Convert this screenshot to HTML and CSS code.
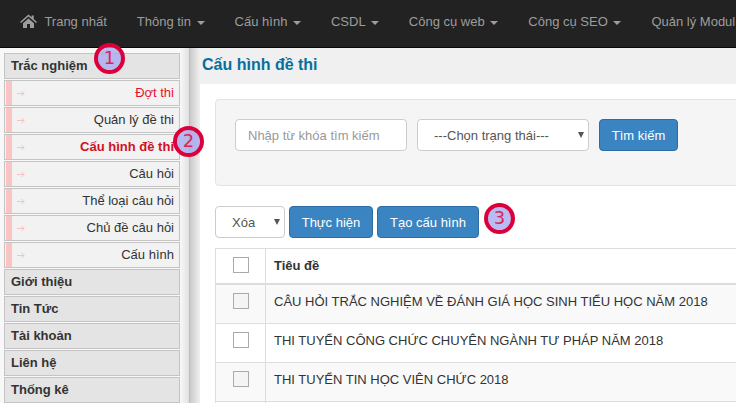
FILE: index.html
```html
<!DOCTYPE html>
<html lang="vi">
<head>
    <meta charset="UTF-8">
    <title>Cấu hình đề thi</title>
    <link rel="stylesheet" href="styles.css">
</head>
<body>
    <nav class="navbar">
        <a class="nav-link nav-home">
            <svg class="home-icon" viewBox="0 0 17 14" width="17" height="14"><path d="M8.5 0.6 L11.6 3.3 V1.4 H13.7 V5.1 L17 8 L16 9 L8.5 2.6 L1 9 L0 8 Z M3 9.2 L8.5 4.4 L14 9.2 V14 H10 V10 H7 V14 H3 Z" fill="#9d9d9d"/></svg>
            Trang nhất
        </a>
        <a class="nav-link">Thông tin <span class="caret"></span></a>
        <a class="nav-link">Cấu hình <span class="caret"></span></a>
        <a class="nav-link">CSDL <span class="caret"></span></a>
        <a class="nav-link">Công cụ web <span class="caret"></span></a>
        <a class="nav-link">Công cụ SEO <span class="caret"></span></a>
        <a class="nav-link">Quản lý Modul</a>
    </nav>

    <div class="wrapper">
        <aside class="sidebar">
            <div class="menu-head">Trắc nghiệm</div>
            <a class="menu-item item-red"><svg class="arrow" viewBox="0 0 8 7" width="8" height="7"><path d="M0 3.5 H7 M4.5 1 L7 3.5 L4.5 6" /></svg>Đợt thi</a>
            <a class="menu-item"><svg class="arrow" viewBox="0 0 8 7" width="8" height="7"><path d="M0 3.5 H7 M4.5 1 L7 3.5 L4.5 6" /></svg>Quản lý đề thi</a>
            <a class="menu-item item-active"><svg class="arrow" viewBox="0 0 8 7" width="8" height="7"><path d="M0 3.5 H7 M4.5 1 L7 3.5 L4.5 6" /></svg>Cấu hình đề thi</a>
            <a class="menu-item"><svg class="arrow" viewBox="0 0 8 7" width="8" height="7"><path d="M0 3.5 H7 M4.5 1 L7 3.5 L4.5 6" /></svg>Câu hỏi</a>
            <a class="menu-item"><svg class="arrow" viewBox="0 0 8 7" width="8" height="7"><path d="M0 3.5 H7 M4.5 1 L7 3.5 L4.5 6" /></svg>Thể loại câu hỏi</a>
            <a class="menu-item"><svg class="arrow" viewBox="0 0 8 7" width="8" height="7"><path d="M0 3.5 H7 M4.5 1 L7 3.5 L4.5 6" /></svg>Chủ đề câu hỏi</a>
            <a class="menu-item"><svg class="arrow" viewBox="0 0 8 7" width="8" height="7"><path d="M0 3.5 H7 M4.5 1 L7 3.5 L4.5 6" /></svg>Cấu hình</a>
            <div class="menu-head">Giới thiệu</div>
            <div class="menu-head">Tin Tức</div>
            <div class="menu-head">Tài khoản</div>
            <div class="menu-head">Liên hệ</div>
            <div class="menu-head">Thống kê</div>
        </aside>

        <main class="content">
            <h1 class="page-title">Cấu hình đề thi</h1>
            <div class="panel">
                <form class="well">
                    <input class="form-control search-input" type="text" placeholder="Nhập từ khóa tìm kiếm">
                    <span class="select-wrap">
                        <select class="form-control status-select">
                            <option>---Chọn trạng thái---</option>
                        </select>
                    </span>
                    <button class="btn btn-search" type="button">Tìm kiếm</button>
                </form>

                <div class="actions">
                    <span class="select-wrap">
                        <select class="form-control action-select">
                            <option>Xóa</option>
                        </select>
                    </span>
                    <button class="btn btn-run" type="button">Thực hiện</button>
                    <button class="btn btn-create" type="button">Tạo cấu hình</button>
                </div>

                <table class="exam-table">
                    <thead>
                        <tr>
                            <th class="col-check"><span class="check"></span></th>
                            <th>Tiêu đề</th>
                        </tr>
                    </thead>
                    <tbody>
                        <tr>
                            <td class="col-check"><span class="check"></span></td>
                            <td>CÂU HỎI TRẮC NGHIỆM VỀ ĐÁNH GIÁ HỌC SINH TIỂU HỌC NĂM 2018</td>
                        </tr>
                        <tr>
                            <td class="col-check"><span class="check"></span></td>
                            <td>THI TUYỂN CÔNG CHỨC CHUYÊN NGÀNH TƯ PHÁP NĂM 2018</td>
                        </tr>
                        <tr>
                            <td class="col-check"><span class="check"></span></td>
                            <td>THI TUYỂN TIN HỌC VIÊN CHỨC 2018</td>
                        </tr>
                        <tr>
                            <td class="col-check"></td>
                            <td></td>
                        </tr>
                    </tbody>
                </table>
            </div>
        </main>
    </div>

    <!-- numbered marks drawn over the screenshot -->
    <span class="mark mark-1">1</span>
    <span class="mark mark-2">2</span>
    <span class="mark mark-3">3</span>
</body>
</html>
```

FILE: styles.css
```css
html, body {
    margin: 0;
    height: 403px;
    overflow: hidden;
}
body {
    position: relative;
    font-family: "Liberation Sans", Arial, sans-serif;
    font-size: 13px;
    color: #333;
    background: #fff;
}
.navbar {
    display: flex;
    height: 47px;
    padding-left: 5px;
    overflow: hidden;
    background: #222;
    border-bottom: 1px solid #080808;
}
.nav-link {
    display: block;
    flex: none;
    padding: 0 15px;
    line-height: 44px;
    color: #9d9d9d;
    white-space: nowrap;
}
.nav-link:last-child {
    padding-right: 0;
}
.home-icon {
    margin-right: 4px;
    vertical-align: -2px;
}
.caret {
    display: inline-block;
    width: 0;
    height: 0;
    margin-left: 2px;
    vertical-align: middle;
    border-top: 4px solid #9d9d9d;
    border-left: 4px solid transparent;
    border-right: 4px solid transparent;
}
.wrapper {
    display: flex;
    height: 355px;
    overflow: hidden;
}
.sidebar {
    flex: none;
    width: 190px;
    box-sizing: border-box;
    padding: 5px 9px 0 4px;
    background: linear-gradient(to right, #f8f8f8 180px, #e2e2e2 189px);
    border-right: 1px solid #bdbdbd;
}
.menu-head {
    box-sizing: border-box;
    height: 26px;
    margin-bottom: 1px;
    padding-left: 6px;
    line-height: 23px;
    font-weight: bold;
    color: #333;
    background: #e4e4e4;
    border: 1px solid #c4c4c4;
}
.menu-item {
    display: flex;
    justify-content: space-between;
    box-sizing: border-box;
    height: 26px;
    margin-bottom: 1px;
    padding-right: 5px;
    padding-left: 1px;
    line-height: 24px;
    text-align: right;
    color: #333;
    background: #f2f2f2;
    border: 1px solid #c4c4c4;
}
.arrow {
    box-sizing: content-box;
    height: 7px;
    padding: 9px 0 8px 5px;
    border-left: 6px solid #fbc4c4;
    fill: none;
    stroke: #f8c0c0;
    stroke-width: 1;
}
.item-red {
    color: #e8112d;
}
.item-active {
    color: #d0111f;
    font-weight: bold;
}
.content {
    flex: 1;
    min-width: 0;
    background: linear-gradient(to right, #cacaca, #f0f0f0 10px);
}
.page-title {
    height: 36px;
    margin: 0 0 0 12px;
    font-size: 16px;
    line-height: 33px;
    font-weight: bold;
    color: #066f9e;
}
.panel {
    box-sizing: border-box;
    height: 319px;
    margin-left: 10px;
    padding: 15px 0 0 15px;
    overflow: hidden;
    background: #fff;
}
.well {
    display: flex;
    align-items: flex-start;
    gap: 10px;
    box-sizing: border-box;
    width: 540px;
    height: 87px;
    padding: 19px 19px 0;
    background: #f5f5f5;
    border: 1px solid #e3e3e3;
    border-radius: 4px;
}
.form-control {
    display: block;
    box-sizing: border-box;
    height: 32px;
    font-family: inherit;
    font-size: 13px;
    color: #555;
    background: #fff;
    border: 1px solid #ccc;
    border-radius: 4px;
    appearance: none;
}
.search-input {
    width: 172px;
    padding: 0 12px;
}
.search-input::placeholder {
    color: #999;
}
.status-select {
    width: 172px;
    padding-left: 16px;
}
/* native arrow of the old browser, small and solid */
.select-wrap {
    position: relative;
    display: block;
}
.select-wrap::after {
    content: "";
    position: absolute;
    right: 5px;
    top: 13px;
    border-top: 6px solid #555;
    border-left: 3.5px solid transparent;
    border-right: 3.5px solid transparent;
}
.btn {
    box-sizing: border-box;
    height: 32px;
    padding: 0;
    font-family: inherit;
    font-size: 13px;
    color: #fff;
    background: #3a84c2;
    border: 1px solid #2e6da4;
    border-radius: 4px;
}
.btn-search {
    width: 79px;
}
.btn-run {
    width: 84px;
}
.btn-create {
    width: 102px;
}
.actions {
    display: flex;
    gap: 4px;
    margin: 20px 0 10px;
}
.action-select {
    width: 70px;
    padding-left: 16px;
}
.exam-table {
    width: 540px;
    border-collapse: collapse;
    color: #333;
}
.exam-table th, .exam-table td {
    padding: 8px 8px 12px;
    border: 1px solid #ddd;
    text-align: left;
    vertical-align: top;
    line-height: 18px;
}
.exam-table th {
    padding-bottom: 8px;
    border-bottom: 2px solid #ddd;
}
.exam-table tbody tr:nth-child(odd) {
    background: #f9f9f9;
}
.exam-table .col-check {
    width: 33px;
    text-align: center;
}
.check {
    display: block;
    box-sizing: border-box;
    width: 16px;
    height: 16px;
    margin: 0 auto;
    background: #fff;
    border: 1px solid #aaa;
}
tbody tr:nth-child(odd) .check {
    background: #f4f4f4;
}
.mark {
    position: absolute;
    box-sizing: border-box;
    width: 31px;
    height: 31px;
    border: 4px solid #dc003a;
    border-radius: 50%;
    background: rgba(170, 170, 240, 0.8);
    color: #d8284f;
    font-family: "DejaVu Sans", sans-serif;
    font-size: 18px;
    line-height: 22px;
    text-align: center;
}
.mark-1 {
    left: 94px;
    top: 43px;
}
.mark-2 {
    left: 173px;
    top: 126px;
}
.mark-3 {
    left: 484px;
    top: 203px;
}
```
